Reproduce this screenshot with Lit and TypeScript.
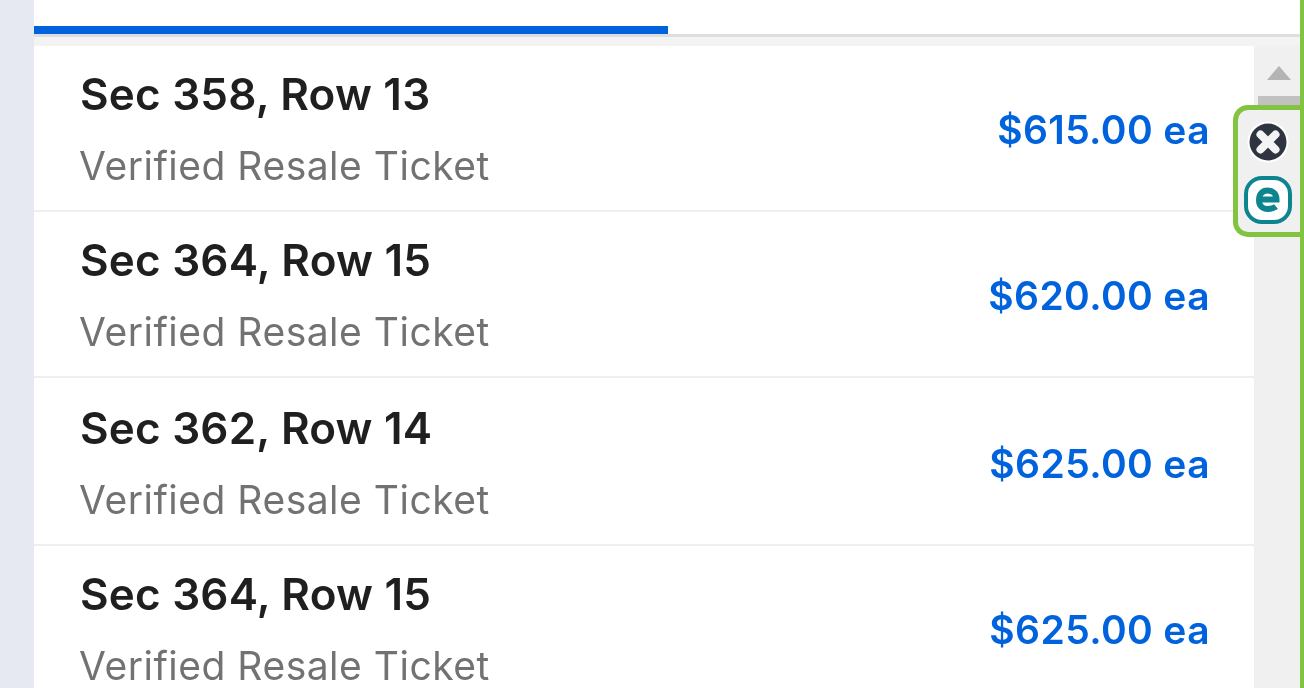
import { LitElement, html, css } from "lit";
import { customElement } from "lit/decorators.js";

const rows = [
  { t: "Sec 358, Row 13", p: "$615.00 ea" },
  { t: "Sec 364, Row 15", p: "$620.00 ea" },
  { t: "Sec 362, Row 14", p: "$625.00 ea" },
  { t: "Sec 364, Row 15", p: "$625.00 ea" },
];

@customElement("app-root")
export class AppRoot extends LitElement {
  static styles = css`
    :host { display: flex; width: 1304px; height: 688px; overflow: hidden; background: #fff; font-family: Inter, Lato, sans-serif; position: relative; filter: blur(0.4px); }
    .side { width: 34px; flex: none; background: #e6e9f2; }
    .panel { width: 1266px; flex: none; display: flex; flex-direction: column; }
    .edge { width: 4px; flex: none; background: #82c341; }
    .tabs { height: 34px; flex: none; display: flex; align-items: flex-end; border-bottom: 3px solid #dedede; }
    .tab { width: 634px; height: 8px; background: #0063dd; }
    .gap { height: 9px; flex: none; background: #f3f3f3; }
    .body { flex: 1; min-height: 0; display: flex; }
    .list { width: 1220px; flex: none; }
    .row { height: 166px; box-sizing: border-box; border-bottom: 2px solid #efefef; padding: 0 44px 0 46px; display: flex; justify-content: space-between; }
    .row:nth-child(3) { height: 168px; padding-top: 2px; }
    .row:last-child { border-bottom: none; }
    .info { display: flex; flex-direction: column; }
    .title { font-size: 44px; line-height: 52px; font-weight: 600; margin-top: 22px; color: #1f1f1f; letter-spacing: 0.2px; }
    .sub { font-size: 39px; line-height: 46px; color: #727272; margin-top: 23px; letter-spacing: 0.5px; margin-left: -1px; }
    .price { font-size: 39px; line-height: 48px; font-weight: 600; color: #0063dd; margin-top: 60px; letter-spacing: 0.4px; }
    .scroll { width: 46px; flex: none; background: #f0f0f0; display: flex; flex-direction: column; }
    .arrow { height: 50px; flex: none; display: flex; justify-content: center; padding: 20px 0 0 3px; box-sizing: border-box; }
    .thumb { height: 20px; flex: none; margin-left: 4px; background: #c1c1c1; }
    .badge { position: absolute; left: 1233px; top: 105px; width: 67px; height: 132px; box-sizing: border-box; border: 5px solid #82c341; border-right: none; border-radius: 15px 0 0 15px; background: #f0f0f0; display: flex; flex-direction: column; align-items: center; gap: 13px; padding: 11px 2px 0 0; }
    svg { display: block; }
  `;

  render() {
    return html`
      <div class="side"></div>
      <div class="panel">
        <div class="tabs"><div class="tab"></div></div>
        <div class="gap"></div>
        <div class="body">
          <div class="list">
            ${rows.map(
              (r) => html`<div class="row">
                <div class="info"><div class="title">${r.t}</div><div class="sub">Verified Resale Ticket</div></div>
                <div class="price">${r.p}</div>
              </div>`
            )}
          </div>
          <div class="scroll">
            <div class="arrow"><svg width="24" height="14" viewBox="0 0 24 14"><path d="M12 0 24 14H0Z" fill="#b4b4b4"/></svg></div>
            <div class="thumb"></div>
          </div>
        </div>
      </div>
      <div class="edge"></div>
      <div class="badge">
        <svg width="42" height="42" viewBox="0 0 42 42">
          <circle cx="21" cy="21" r="20.5" fill="#fff"/>
          <circle cx="21" cy="21" r="18.5" fill="#2f3540"/>
          <path d="M13.5 13.5 28.5 28.5M28.5 13.5 13.5 28.5" stroke="#f4f4f4" stroke-width="8" stroke-linecap="round"/>
        </svg>
        <svg width="48" height="48" viewBox="0 0 48 48">
          <rect x="2" y="2" width="44" height="44" rx="16" fill="#fff" stroke="#0d858e" stroke-width="4"/>
          <path d="M15 23.5H32.5C32.5 17.5 28.5 14.5 23.5 14.5S15 18 15 24 18.5 33 23.5 33C27 33 30 32.2 32 30.5" fill="none" stroke="#0d858e" stroke-width="6"/>
        </svg>
      </div>
    `;
  }
}
